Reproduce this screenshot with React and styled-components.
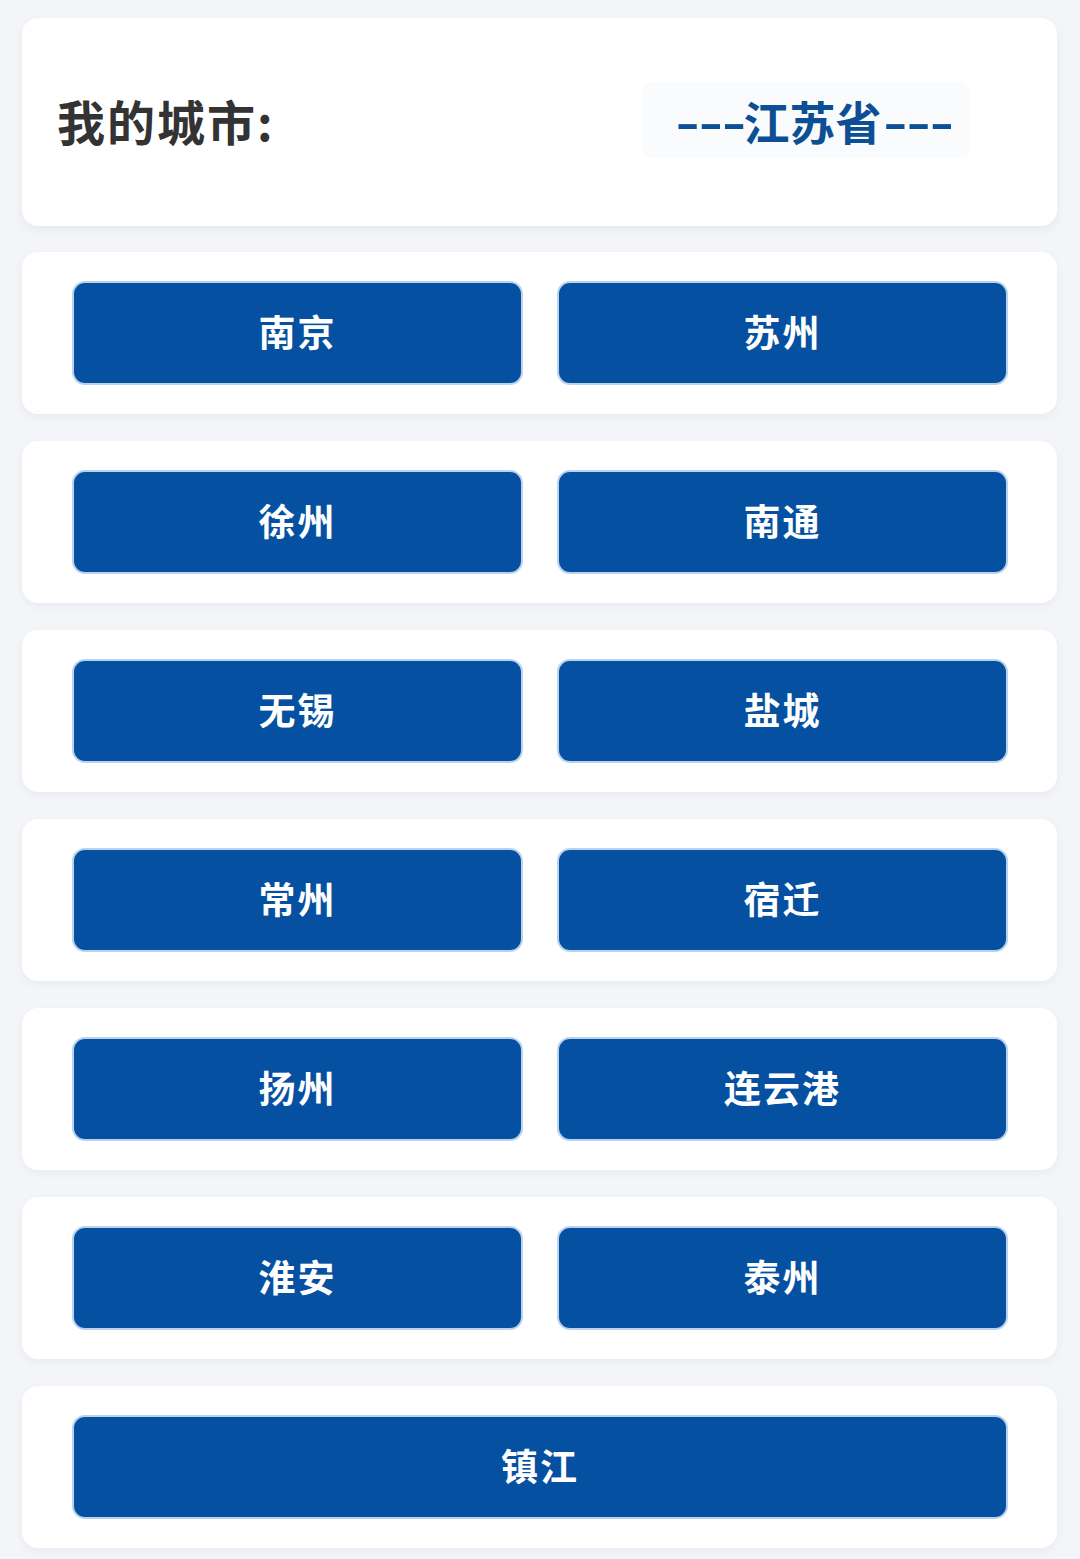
import React from "react";
import styled, { createGlobalStyle } from "styled-components";

const GlobalStyle = createGlobalStyle`
  body {
    margin: 0;
    background: #f3f5f8;
    font-family: "Noto Sans CJK SC", "Noto Sans", sans-serif;
  }
`;

const Page = styled.div`
  padding: 18px 23px 11px 22px;
  display: flex;
  flex-direction: column;
  gap: 27px;
`;

const HeaderCard = styled.div`
  height: 208px;
  box-sizing: border-box;
  margin-bottom: -1px;
  background: #ffffff;
  border-radius: 16px;
  box-shadow: 0 4px 10px rgba(20, 40, 80, 0.06);
  display: flex;
  align-items: center;
  justify-content: space-between;
  padding: 0 87px 5px 35px;
`;

const Title = styled.div`
  font-size: 48px;
  font-weight: 700;
  color: #333333;
  letter-spacing: 2px;
  line-height: 1;
`;

const Province = styled.div`
  width: 328px;
  height: 76px;
  border-radius: 10px;
  background: #f9fbfd;
  display: flex;
  align-items: center;
  justify-content: center;
  font-size: 46px;
  font-weight: 700;
  color: #0d4f94;
  line-height: 1;
  box-sizing: border-box;
  padding-left: 16px;
`;

const Dashes = styled.span`
  display: inline-block;
  letter-spacing: -1px;
  transform: scaleX(1.45);
  transform-origin: ${(p) => (p.$left ? "right center" : "left center")};
  margin: ${(p) => (p.$left ? "0 -2px 0 0" : "0 0 0 1px")};
`;

const RowCard = styled.div`
  background: #ffffff;
  border-radius: 16px;
  box-shadow: 0 3px 8px rgba(20, 40, 80, 0.05);
  padding: 29px 49px 29px 50px;
  display: grid;
  grid-template-columns: ${(p) => (p.$single ? "1fr" : "1fr 1fr")};
  gap: 34px;
`;

const CityButton = styled.button`
  box-sizing: border-box;
  height: 104px;
  border: 2px solid #b9d3ef;
  border-radius: 13px;
  background: #0550a0;
  color: #ffffff;
  font-family: "Noto Sans CJK SC", "Noto Sans", sans-serif;
  font-size: 37px;
  font-weight: 700;
  letter-spacing: 2px;
  padding: 0 0 4px;
  cursor: pointer;
`;

const rows = [
  ["南京", "苏州"],
  ["徐州", "南通"],
  ["无锡", "盐城"],
  ["常州", "宿迁"],
  ["扬州", "连云港"],
  ["淮安", "泰州"],
  ["镇江"],
];

const App = () => {
  return (
    <>
      <GlobalStyle />
      <Page>
        <HeaderCard>
          <Title>我的城市:</Title>
          <Province>
            <Dashes $left>---</Dashes>江苏省<Dashes>---</Dashes>
          </Province>
        </HeaderCard>
        {rows.map((row, i) => (
          <RowCard key={i} $single={row.length === 1}>
            {row.map((city) => (
              <CityButton key={city}>{city}</CityButton>
            ))}
          </RowCard>
        ))}
      </Page>
    </>
  );
};

export default App;
